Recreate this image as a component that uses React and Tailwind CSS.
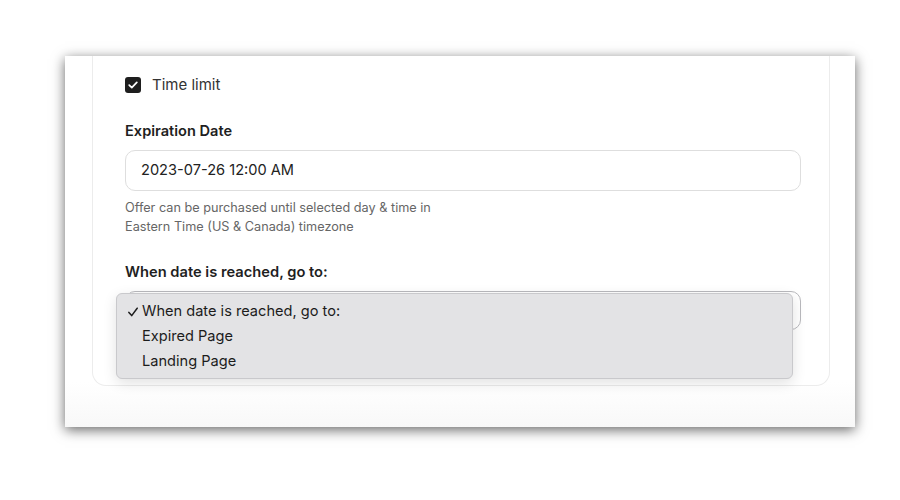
import React from "react";

export default function App() {
  return (
    <div className="w-[900px] h-[500px] bg-white pt-[56px] pl-[65px]" style={{ fontFamily: "Inter, 'Noto Sans', sans-serif" }}>
      <div className="relative w-[790px] h-[371px] bg-white shadow-[0_3px_12px_rgba(0,0,0,0.6)] overflow-hidden">
        <div className="absolute left-0 right-0 bottom-0 h-[45px] bg-gradient-to-b from-white to-[#f8f8f8]" />
        <div className="ml-[27px] w-[738px] border-x border-b border-[#ececec] rounded-b-[14px] pl-[32px] pr-[30px] pt-[21px] pb-[55px] bg-white relative z-10">
          <div className="flex items-center gap-[11px] h-[16px]">
            <div className="w-[16px] h-[16px] rounded-[3px] bg-[#1e1e1e] flex items-center justify-center">
              <svg width="10" height="8" viewBox="0 0 10 8" fill="none">
                <path d="M1.2 4.1 L3.8 6.6 L8.8 1.4" stroke="white" strokeWidth="1.7" strokeLinecap="round" strokeLinejoin="round" />
              </svg>
            </div>
            <span className="text-[15px] text-[#333]">Time limit</span>
          </div>
          <div className="mt-[28px] h-[20px] leading-[20px] text-[14.6px] font-semibold text-[#1f1f1f]">Expiration Date</div>
          <div className="mt-[9px] h-[41px] w-[676px] border border-[#dedede] rounded-[10px] flex items-center pl-[15px] text-[14.6px] text-[#222]">
            2023-07-26 12:00 AM
          </div>
          <div className="mt-[7px] text-[12.7px] leading-[19px] text-[#666]">
            <div>Offer can be purchased until selected day &amp; time in</div>
            <div>Eastern Time (US &amp; Canada) timezone</div>
          </div>
          <div className="mt-[25px] h-[22px] leading-[22px] text-[14.7px] font-semibold text-[#1f1f1f]">When date is reached, go to:</div>
          <div className="relative mt-[8px] h-[39px] w-[676px] border border-[#b9b9bd] rounded-[10px]">
            <div className="absolute top-[1px] left-[-10px] w-[677px] h-[86px] bg-[#e3e3e5] border border-[#c9c9cc] rounded-[6px] shadow-[0_4px_14px_rgba(0,0,0,0.12)] pt-[5px] text-[14.6px] text-[#1c1c1c]">
              <div className="h-[25px] flex items-center">
                <span className="w-[25px] pl-[11px] flex items-center">
                  <svg width="10" height="10" viewBox="0 0 10 10" fill="none">
                    <path d="M0.9 5.4 L3.7 8.6 L9.2 1.2" stroke="#1c1c1c" strokeWidth="1.5" strokeLinecap="round" strokeLinejoin="round" />
                  </svg>
                </span>
                <span>When date is reached, go to:</span>
              </div>
              <div className="h-[25px] flex items-center pl-[25px]">Expired Page</div>
              <div className="h-[25px] flex items-center pl-[25px]">Landing Page</div>
            </div>
          </div>
        </div>
      </div>
    </div>
  );
}
